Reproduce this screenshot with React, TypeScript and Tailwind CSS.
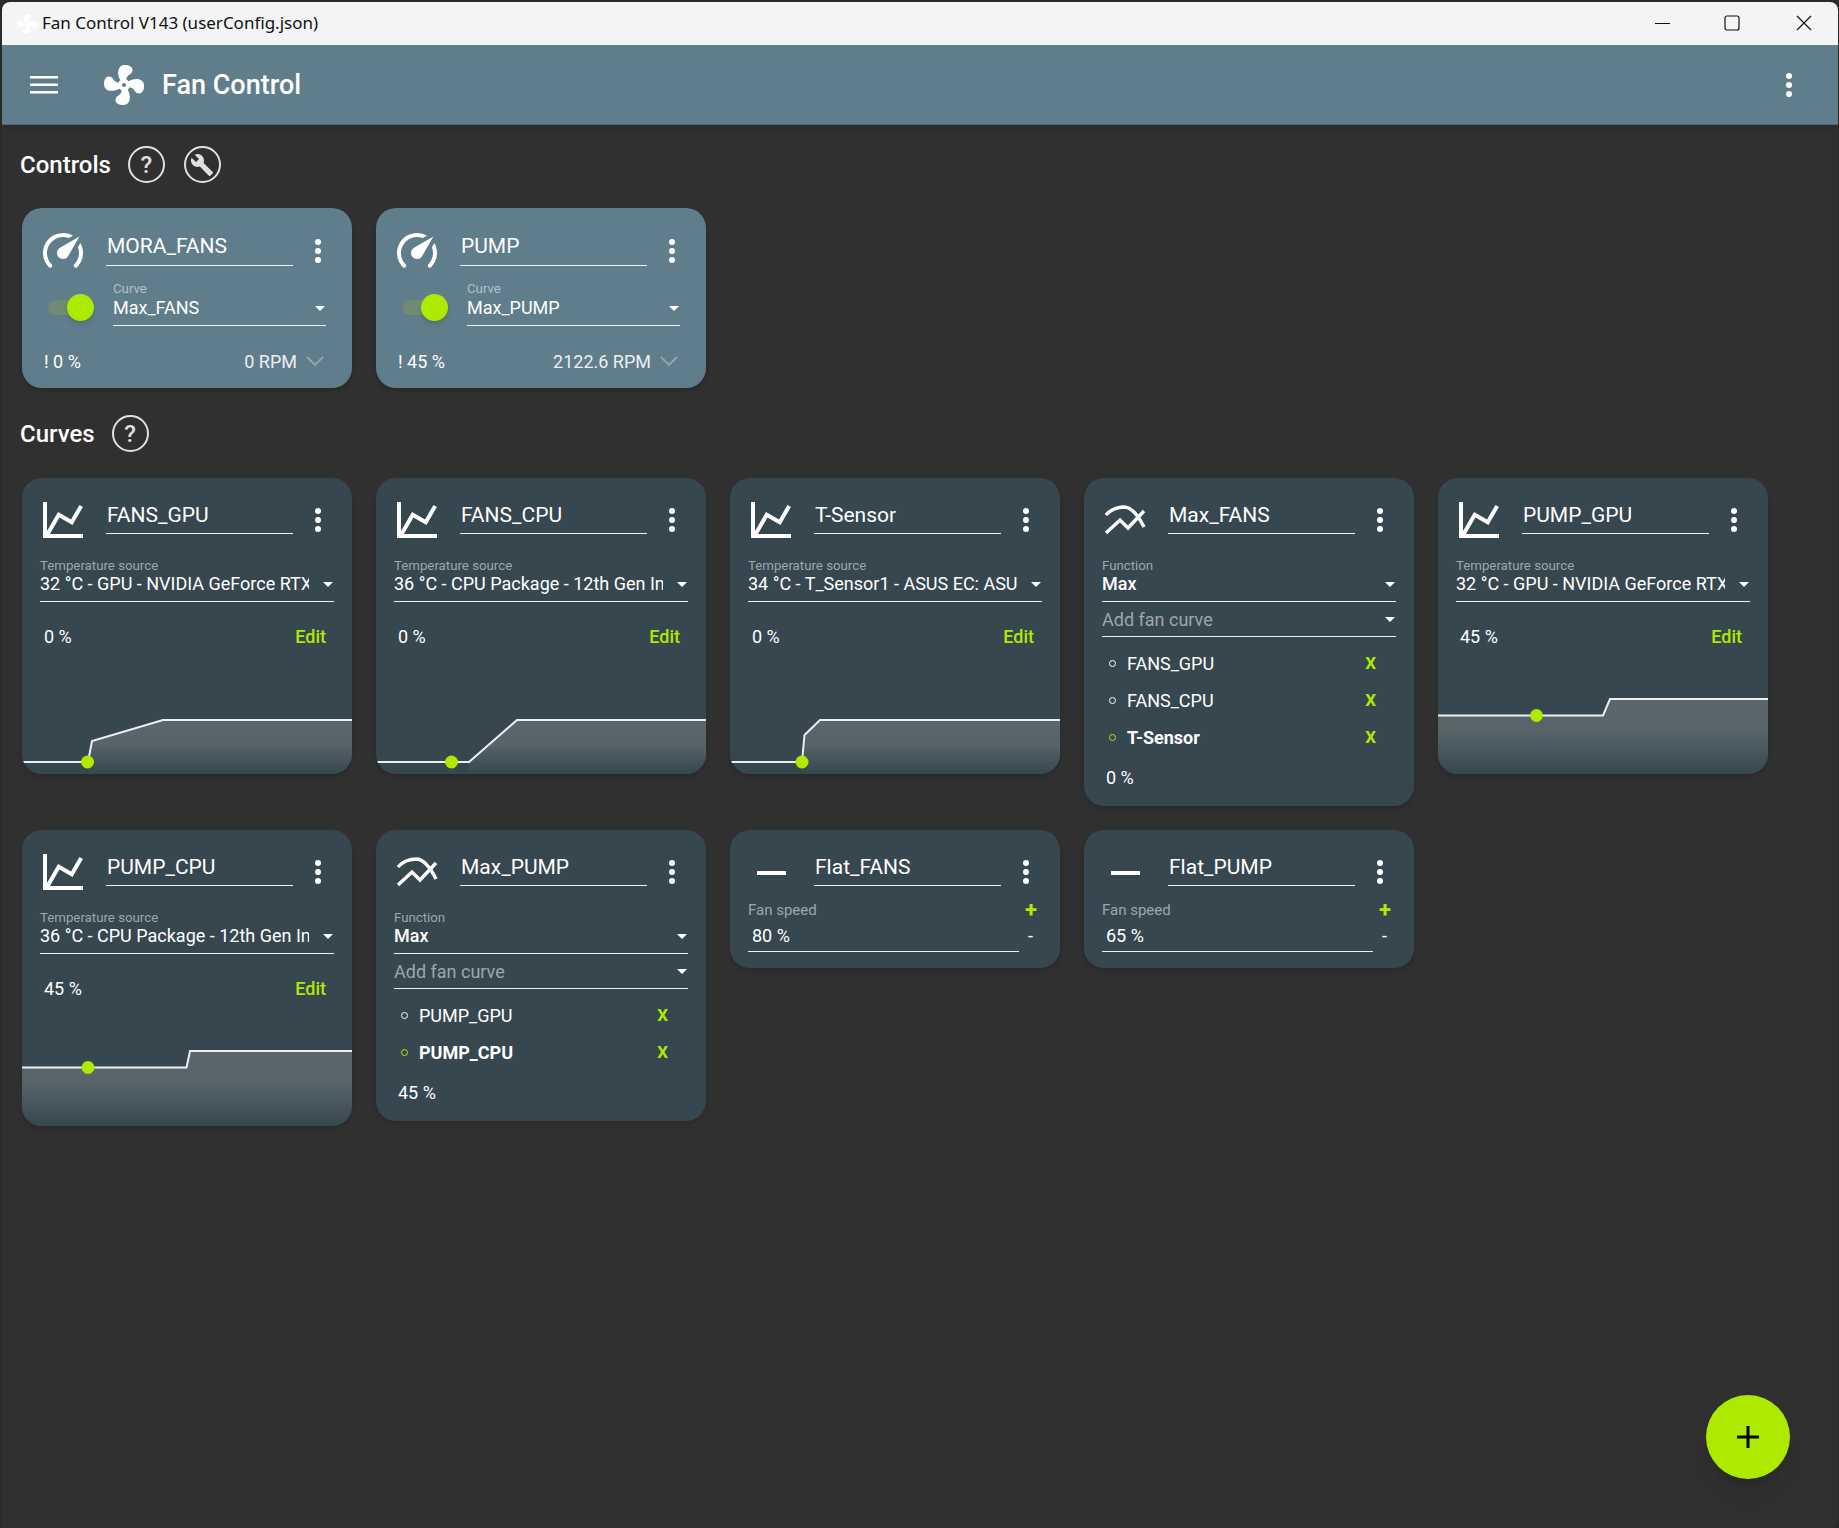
const accent = "#aeea00";

const FAN =
  "M12,11A1,1 0 0,0 11,12A1,1 0 0,0 12,13A1,1 0 0,0 13,12A1,1 0 0,0 12,11M12.5,2C17,2 17.11,5.57 14.75,6.75C13.76,7.24 13.32,8.29 13.13,9.22C13.61,9.42 14.03,9.73 14.35,10.13C18.05,8.13 22.03,8.92 22.03,12.5C22.03,17 18.46,17.1 17.28,14.73C16.78,13.74 15.72,13.3 14.79,13.11C14.59,13.59 14.28,14 13.88,14.34C15.87,18.03 15.08,22 11.5,22C7,22 6.91,18.42 9.27,17.24C10.25,16.75 10.69,15.71 10.89,14.79C10.4,14.59 9.97,14.27 9.65,13.87C5.96,15.85 2,15.07 2,11.5C2,7 5.56,6.89 6.74,9.26C7.24,10.25 8.29,10.68 9.22,10.87C9.41,10.39 9.73,9.97 10.14,9.65C8.15,5.96 8.94,2 12.5,2Z";
const GAUGE =
  "M12,16A3,3 0 0,1 9,13C9,11.88 9.61,10.9 10.5,10.39L20.21,4.77L14.68,14.35C14.18,15.33 13.17,16 12,16M12,3C13.81,3 15.5,3.5 16.97,4.32L14.87,5.53C14,5.19 13,5 12,5A8,8 0 0,0 4,13C4,15.21 4.89,17.21 6.34,18.65H6.35C6.74,19.04 6.74,19.67 6.35,20.06C5.96,20.45 5.32,20.45 4.93,20.07V20.07C3.12,18.26 2,15.76 2,13A10,10 0 0,1 12,3M22,13C22,15.76 20.88,18.26 19.07,20.07V20.07C18.68,20.45 18.05,20.45 17.66,20.06C17.27,19.67 17.27,19.04 17.66,18.65V18.65C19.11,17.2 20,15.21 20,13C20,12 19.81,11 19.46,10.1L20.67,8C21.5,9.5 22,11.18 22,13Z";
const CHART =
  "M16,11.78L20.24,4.45L21.97,5.45L16.74,14.5L10.23,10.75L5.46,19H22V21H2V3H4V17.54L9.5,8L16,11.78Z";
const WRENCH =
  "M22.7,19L13.6,9.9C14.5,7.6 14,4.9 12.1,3C10.1,1 7.1,0.6 4.7,1.7L9,6L6,9L1.6,4.7C0.4,7.1 0.9,10.1 2.9,12.1C4.8,14 7.5,14.5 9.8,13.6L18.9,22.7C19.3,23.1 19.9,23.1 20.3,22.7L22.6,20.4C23.1,20 23.1,19.3 22.7,19Z";

function MdiIcon({ d, size = 48 }: { d: string; size?: number }) {
  return (
    <svg width={size} height={size} viewBox="0 0 24 24" fill="currentColor" className="shrink-0">
      <path d={d} />
    </svg>
  );
}

function Kebab({ className = "" }: { className?: string }) {
  return (
    <svg width="36" height="36" viewBox="0 0 36 36" fill="#fff" className={"shrink-0 " + className}>
      <circle cx="18" cy="9" r="3" />
      <circle cx="18" cy="18" r="3" />
      <circle cx="18" cy="27" r="3" />
    </svg>
  );
}

function Caret() {
  return (
    <svg width="10" height="5" viewBox="0 0 10 5" fill="#fff" className="shrink-0">
      <path d="M0 0h10L5 5z" />
    </svg>
  );
}

function MaxIcon() {
  return (
    <svg width="48" height="48" viewBox="0 0 48 48" fill="none" stroke="#fff" strokeWidth="3.4" className="shrink-0">
      <path d="M5 19 C11 12 18 11 24 11 C32 12 38 21 43 31" />
      <path d="M5 37 L19 24 L27 32 L43 15" />
    </svg>
  );
}

function FlatIcon() {
  return (
    <svg width="48" height="48" viewBox="0 0 48 48" fill="#fff" className="shrink-0">
      <rect x="10" y="23" width="29" height="4" />
    </svg>
  );
}

function CardHeader({ icon, name, control }: { icon: React.ReactNode; name: string; control?: boolean }) {
  return (
    <div className={"flex items-start " + (control ? "h-[58px]" : "h-[56px]")}>
      <div className={"ml-[17px] text-white " + (control ? "mt-[19px]" : "mt-[18px]")}>{icon}</div>
      <div
        className={
          "ml-[19px] w-[187px] border-b-[1.5px] border-[#eceff1] pl-[1px] text-[21px] leading-[24px] text-white " +
          (control ? "h-[58px] pt-[26px]" : "h-[56px] pt-[25px]")
        }
      >
        {name}
      </div>
      <Kebab className={"ml-[7px] " + (control ? "mt-[25px]" : "mt-[24px]")} />
    </div>
  );
}

function Field({ label, value, medium }: { label: string; value: string; medium?: boolean }) {
  return (
    <div className="ml-[18px] mt-[25px] w-[294px]">
      <div className="h-[14px] text-[13.25px] leading-[14px] text-[#9ea6aa]">{label}</div>
      <div className="box-content flex h-[28px] items-start justify-between border-b-[1.5px] border-[#eceff1] pr-[1px]">
        <span
          className={
            "w-[269px] overflow-hidden whitespace-nowrap text-[18px] leading-[22px] text-white " +
            (medium ? "font-medium" : "")
          }
        >
          {value}
        </span>
        <span className="mt-[9px]">
          <Caret />
        </span>
      </div>
    </div>
  );
}

type Curve = { line: string; fill: string; dot: [number, number] };

function CurveChart({ id, line, fill, dot }: Curve & { id: string }) {
  return (
    <svg width="330" height="84" viewBox="0 0 330 84" className="mt-auto block">
      <defs>
        <linearGradient id={id} x1="0" y1="0" x2="0" y2="1">
          <stop offset="0" stopColor="#5b676c" />
          <stop offset="0.45" stopColor="#566369" />
          <stop offset="1" stopColor="#37474f" />
        </linearGradient>
      </defs>
      <path d={fill} fill={`url(#${id})`} />
      <path d={line} fill="none" stroke="#eceff1" strokeWidth="2" />
      <circle cx={dot[0]} cy={dot[1]} r="6.5" fill={accent} />
    </svg>
  );
}

function GraphCard({
  name,
  source,
  percent,
  curve,
}: {
  name: string;
  source: string;
  percent: string;
  curve: Curve;
}) {
  return (
    <div className="flex h-[296px] w-[330px] flex-col overflow-hidden rounded-[20px] bg-[#37474f] shadow-md">
      <CardHeader icon={<MdiIcon d={CHART} />} name={name} />
      <Field label="Temperature source" value={source} />
      <div className="mt-[24px] flex h-[20px] items-center justify-between pl-[22px] pr-[26px] text-[18px]">
        <span className="text-white">{percent}</span>
        <span className="font-medium" style={{ color: accent }}>
          Edit
        </span>
      </div>
      <CurveChart id={"g-" + name} {...curve} />
    </div>
  );
}

function MaxCard({
  name,
  items,
  active,
  percent,
}: {
  name: string;
  items: string[];
  active: string;
  percent: string;
}) {
  return (
    <div className="w-[330px] rounded-[20px] bg-[#37474f] pb-[18px] shadow-md">
      <CardHeader icon={<MaxIcon />} name={name} />
      <Field label="Function" value="Max" medium />
      <div className="ml-[18px] flex h-[35px] w-[294px] items-center justify-between border-b-[1.5px] border-[#eceff1] pr-[1px] pt-[1px]">
        <span className="text-[18px] text-[#9ea6aa]">Add fan curve</span>
        <Caret />
      </div>
      <div className="mt-[8px] flex flex-col">
        {items.map((item) => (
          <div key={item} className="flex h-[37px] items-center pl-[25px] pr-[38px] text-[18px]">
            <span
              className={
                "h-[7px] w-[7px] rounded-full border-[1.5px] " +
                (item === active ? "border-[#aeea00]" : "border-white")
              }
            />
            <span className={"ml-[11px] text-white " + (item === active ? "font-bold" : "")}>{item}</span>
            <span className="ml-auto text-[17px] font-bold text-[#aeea00]">X</span>
          </div>
        ))}
      </div>
      <div className="mt-[12px] h-[20px] pl-[22px] text-[18px] leading-[20px] text-white">{percent}</div>
    </div>
  );
}

function FlatCard({ name, value }: { name: string; value: string }) {
  return (
    <div className="h-[138px] w-[330px] rounded-[20px] bg-[#37474f] shadow-md">
      <CardHeader icon={<FlatIcon />} name={name} />
      <div className="ml-[18px] mt-[15px] flex h-[18px] w-[289px] items-center justify-between">
        <span className="text-[15px] text-[#9ea6aa]">Fan speed</span>
        <span className="text-[22px] font-bold leading-none text-[#aeea00]">+</span>
      </div>
      <div className="ml-[18px] mt-[6px] flex w-[289px]">
        <div className="h-[26.5px] w-[271px] border-b-[1.5px] border-[#eceff1] pl-[4px] text-[18px] leading-[22px] text-white">
          {value}
        </div>
        <span className="ml-[9px] text-[18px] leading-[22px] text-white">-</span>
      </div>
    </div>
  );
}

function ControlCard({
  name,
  curve,
  percent,
  rpm,
}: {
  name: string;
  curve: string;
  percent: string;
  rpm: string;
}) {
  return (
    <div className="h-[180px] w-[330px] rounded-[20px] bg-[#607d8b] shadow-md">
      <CardHeader icon={<MdiIcon d={GAUGE} />} name={name} control />
      <div className="mt-[16px] flex items-center">
        <div className="relative ml-[26px] mt-[6px] h-[15px] w-[39px] rounded-full bg-[#6f8b72]">
          <span className="absolute right-[-7px] top-[-6px] h-[27px] w-[27px] rounded-full bg-[#aeea00] shadow-md" />
        </div>
        <div className="ml-[26px] w-[213px]">
          <div className="h-[13px] text-[13.25px] leading-[13px] text-[#b3c0c6]">Curve</div>
          <div className="flex h-[31px] items-start justify-between border-b-[1.5px] border-[#eceff1] pr-[1px] pt-[2px]">
            <span className="text-[18px] leading-[22px] text-white">{curve}</span>
            <span className="mt-[9px]">
              <Caret />
            </span>
          </div>
        </div>
      </div>
      <div className="mt-[25px] flex h-[20px] items-center pl-[22px] pr-[28px] text-[18px] text-[#eceff1]">
        <span className="text-white">{percent}</span>
        <span className="ml-auto">{rpm}</span>
        <svg width="18" height="10" viewBox="0 0 18 10" fill="none" stroke="#8fa5b0" strokeWidth="2" className="ml-[9px]">
          <path d="M1 1l8 8 8-8" />
        </svg>
      </div>
    </div>
  );
}

function HelpButton() {
  return (
    <span className="-mt-[1px] flex h-[37px] w-[37px] items-center justify-center rounded-full border-2 border-[#e0e0e0] text-[24px] font-medium text-[#e0e0e0]">
      ?
    </span>
  );
}

function SectionHeading({ title, heightClass, tools }: { title: string; heightClass: string; tools?: boolean }) {
  return (
    <div className={"flex items-center " + heightClass}>
      <span className="-ml-[2px] mr-[17px] text-[24px] font-medium text-white">{title}</span>
      <HelpButton />
      {tools && (
        <span className="-mt-[1px] ml-[19px] flex h-[37px] w-[37px] items-center justify-center rounded-full border-2 border-[#e0e0e0] text-[#e0e0e0]">
          <MdiIcon d={WRENCH} size={24} />
        </span>
      )}
    </div>
  );
}

const fansGpu: Curve = {
  line: "M0 72H66L70 51L141 30H330",
  fill: "M66 84V72L70 51L141 30H330V84Z",
  dot: [65.5, 72],
};
const fansCpu: Curve = {
  line: "M0 72H93L141 30H330",
  fill: "M93 84V72L141 30H330V84Z",
  dot: [75.5, 72],
};
const tSensor: Curve = {
  line: "M0 72H72L74.5 45L90 30H330",
  fill: "M72 84V72L74.5 45L90 30H330V84Z",
  dot: [72, 72],
};
const pumpGpu: Curve = {
  line: "M0 25.5H165L172 9H330",
  fill: "M0 84V25.5H165L172 9H330V84Z",
  dot: [98.5, 25.5],
};
const pumpCpu: Curve = {
  line: "M0 25.5H164.5L168 9H330",
  fill: "M0 84V25.5H164.5L168 9H330V84Z",
  dot: [66, 25.5],
};

export default function App() {
  return (
    <div className="h-[1528px] w-[1839px] bg-[#2a2a2a] pl-[2px] pr-[1px] pt-[2px] font-['Roboto',sans-serif]">
      <div className="relative flex h-[1526px] flex-col overflow-hidden rounded-t-[8px] rounded-br-[8px] bg-[#303030]">
        {/* Title bar */}
        <div className="flex h-[43px] shrink-0 items-center bg-[#f3f4f4] pl-[13px]">
          <span className="text-white">
            <MdiIcon d={FAN} size={24} />
          </span>
          <span className="-mt-[1px] ml-[3px] font-['Noto_Sans',sans-serif] text-[17px] text-[#111]">
            Fan Control V143 (userConfig.json)
          </span>
          <svg width="16" height="16" viewBox="0 0 16 16" fill="none" stroke="#111" className="-mt-[2px] ml-auto">
            <path d="M0 8.5h15" />
          </svg>
          <svg width="16" height="16" viewBox="0 0 16 16" fill="none" stroke="#111" strokeWidth="1.2" className="-mt-[2px] ml-[53px]">
            <rect x="1" y="1" width="14" height="14" rx="2" />
          </svg>
          <svg width="16" height="16" viewBox="0 0 16 16" fill="none" stroke="#111" strokeWidth="1.2" className="-mt-[2px] ml-[56px] mr-[26px]">
            <path d="M1 1l14 14M15 1L1 15" />
          </svg>
        </div>

        {/* App bar */}
        <div className="flex h-[80px] shrink-0 items-center border-b border-[#4f6773] bg-[#607d8b] text-white shadow-md">
          <svg width="28" height="18" viewBox="0 0 28 18" fill="#fff" className="ml-[28px]">
            <rect y="0" width="28" height="2.5" />
            <rect y="7.5" width="28" height="2.5" />
            <rect y="15" width="28" height="2.5" />
          </svg>
          <span className="ml-[42px]">
            <MdiIcon d={FAN} />
          </span>
          <span className="ml-[14px] pt-[2px] text-[27px] font-medium">Fan Control</span>
          <Kebab className="ml-auto mr-[31px]" />
        </div>

        {/* Content */}
        <div className="pl-[20px]">
          <SectionHeading title="Controls" heightClass="h-[83px] pb-[3px]" tools />
          <div className="flex gap-[24px]">
            <ControlCard name="MORA_FANS" curve="Max_FANS" percent="! 0 %" rpm="0 RPM" />
            <ControlCard name="PUMP" curve="Max_PUMP" percent="! 45 %" rpm="2122.6 RPM" />
          </div>
          <SectionHeading title="Curves" heightClass="h-[90px] pt-[2px]" />
          <div className="flex w-[1800px] flex-wrap items-start gap-[24px]">
            <GraphCard name="FANS_GPU" source="32 °C - GPU - NVIDIA GeForce RTX 4090" percent="0 %" curve={fansGpu} />
            <GraphCard name="FANS_CPU" source="36 °C - CPU Package - 12th Gen Intel Core" percent="0 %" curve={fansCpu} />
            <GraphCard name="T-Sensor" source="34 °C - T_Sensor1 - ASUS EC: ASUS" percent="0 %" curve={tSensor} />
            <MaxCard name="Max_FANS" items={["FANS_GPU", "FANS_CPU", "T-Sensor"]} active="T-Sensor" percent="0 %" />
            <GraphCard name="PUMP_GPU" source="32 °C - GPU - NVIDIA GeForce RTX 4090" percent="45 %" curve={pumpGpu} />
            <GraphCard name="PUMP_CPU" source="36 °C - CPU Package - 12th Gen Intel Core" percent="45 %" curve={pumpCpu} />
            <MaxCard name="Max_PUMP" items={["PUMP_GPU", "PUMP_CPU"]} active="PUMP_CPU" percent="45 %" />
            <FlatCard name="Flat_FANS" value="80 %" />
            <FlatCard name="Flat_PUMP" value="65 %" />
          </div>
        </div>

        {/* Floating add button */}
        <div className="absolute bottom-[49px] right-[48px] flex h-[84px] w-[84px] items-center justify-center rounded-full bg-[#aeea00] shadow-xl">
          <svg width="22" height="22" viewBox="0 0 22 22" stroke="#000" strokeWidth="3">
            <path d="M11 0v22M0 11h22" />
          </svg>
        </div>
      </div>
    </div>
  );
}
